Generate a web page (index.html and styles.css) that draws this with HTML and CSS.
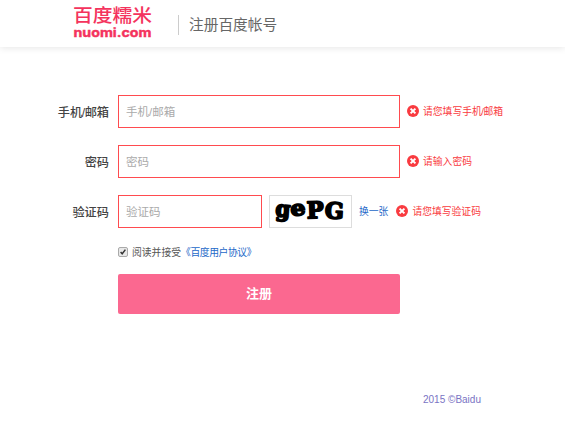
FILE: index.html
```html
<!DOCTYPE html>
<html lang="zh-CN">
<head>
    <meta charset="UTF-8">
    <meta name="viewport" content="width=device-width, initial-scale=1.0">
    <title>注册百度帐号</title>
    <link rel="stylesheet" href="styles.css">
</head>
<body>
    <svg class="symbols" width="0" height="0">
        <symbol id="icon-error" viewBox="0 0 12 12">
            <circle cx="6" cy="6" r="6" fill="#f93b40"/>
            <path d="M3.6 3.6l4.8 4.8M8.4 3.6l-4.8 4.8" stroke="#fff" stroke-width="2"/>
        </symbol>
    </svg>
    <header class="header">
        <svg class="logo" viewBox="0 0 80 34" width="80" height="34">
            <text class="logo-cn" x="0" y="15.5" textLength="79" lengthAdjust="spacingAndGlyphs">百度糯米</text>
            <text class="logo-en" x="0.5" y="30.5" textLength="78" lengthAdjust="spacingAndGlyphs">nuomi.com</text>
        </svg>
        <h1 class="title">注册百度帐号</h1>
    </header>
    <form class="form">
        <div class="row">
            <label class="label" for="account">手机<span class="slash">/</span>邮箱</label>
            <input class="input" id="account" type="text" placeholder="手机/邮箱">
            <span class="error"><svg class="error-icon"><use href="#icon-error"/></svg><span>请您填写手机<span class="slash">/</span>邮箱</span></span>
        </div>
        <div class="row">
            <label class="label" for="password">密码</label>
            <input class="input" id="password" type="password" placeholder="密码">
            <span class="error"><svg class="error-icon"><use href="#icon-error"/></svg><span>请输入密码</span></span>
        </div>
        <div class="row">
            <label class="label" for="code">验证码</label>
            <input class="input input-code" id="code" type="text" placeholder="验证码">
            <div class="captcha">
                <svg viewBox="0 0 81 31" width="81" height="31">
                    <text class="captcha-text" transform="translate(5 20) rotate(4)" font-size="22" textLength="15" lengthAdjust="spacingAndGlyphs">g</text>
                    <text class="captcha-text" transform="translate(21 20) rotate(-5)" font-size="21" textLength="15" lengthAdjust="spacingAndGlyphs">e</text>
                    <text class="captcha-text" transform="translate(37 22.5) rotate(-2)" font-size="23" textLength="17" lengthAdjust="spacingAndGlyphs">P</text>
                    <text class="captcha-text" transform="translate(54.5 22) rotate(3)" font-size="22" textLength="19" lengthAdjust="spacingAndGlyphs">G</text>
                </svg>
            </div>
            <a class="change" href="#">换一张</a>
            <span class="error error-code"><svg class="error-icon"><use href="#icon-error"/></svg><span>请您填写验证码</span></span>
        </div>
        <div class="agreement">
            <span class="checkbox">
                <svg viewBox="0 0 10 10" width="10" height="10"><path d="M2 5l2 2.2L8 2" fill="none" stroke="#333" stroke-width="1.8"/></svg>
            </span>
            <span>阅读并接受</span><a class="protocol" href="#">《百度用户协议》</a>
        </div>
        <button class="submit" type="button">注册</button>
    </form>
    <footer class="footer">2015 ©Baidu</footer>
</body>
</html>
```

FILE: styles.css
```css
* {
    box-sizing: border-box;
}

body {
    margin: 0;
    background: #fff;
    color: #555;
    font-family: "Liberation Sans", "Noto Sans CJK SC", sans-serif;
    font-size: 10px;
}

a {
    color: #2468c8;
    text-decoration: none;
}

.symbols {
    display: block;
}

.header {
    display: flex;
    height: 47px;
    padding: 6px 0 0 73px;
    box-shadow: 0 1px 7px rgba(0, 0, 0, 0.1);
}

.logo {
    overflow: visible;
    fill: #f4335d;
}

.logo-cn {
    font-family: "Noto Sans CJK SC", sans-serif;
    font-size: 18.5px;
    font-weight: 500;
}

.logo-en {
    stroke: #f4335d;
    stroke-width: 0.4;
    font-family: Inter, sans-serif;
    font-size: 12.5px;
    font-weight: 700;
}

.title {
    height: 20px;
    margin: 9px 0 0 25px;
    padding-left: 10px;
    border-left: 1px solid #ccc;
    color: #666;
    font-size: 14.7px;
    font-weight: 400;
    line-height: 21px;
}

.form {
    padding-top: 48px;
}

.row {
    display: flex;
    align-items: center;
    height: 33px;
    margin-bottom: 17px;
}

.label {
    width: 109px;
    margin-right: 9px;
    color: #444;
    font-size: 12.2px;
    font-weight: 500;
    text-align: right;
    white-space: nowrap;
}

.slash {
    margin: 0 -0.5px;
}

.input {
    width: 282px;
    height: 33px;
    padding: 0 8px 0 7px;
    border: 1px solid #ff4b4f;
    outline: none;
    font-family: inherit;
    font-size: 11.5px;
}

.input::placeholder {
    color: #aaa;
}

.input-code {
    width: 144px;
}

.captcha {
    width: 83px;
    height: 33px;
    margin: 0 7px;
    border: 1px solid #ddd;
}

.captcha svg {
    display: block;
    overflow: visible;
}

.captcha-text {
    fill: #000;
    stroke: #000;
    stroke-width: 1.8;
    stroke-linejoin: round;
    font-family: "DejaVu Serif", serif;
    font-weight: 700;
}

.change {
    padding-bottom: 2px;
    font-size: 9.8px;
}

.error {
    display: flex;
    align-items: center;
    gap: 4px;
    margin-left: 7px;
    padding-bottom: 2px;
    color: #f93b40;
    font-size: 9.8px;
    white-space: nowrap;
}

.error-code {
    margin-left: 8px;
}

.error-icon {
    width: 12px;
    height: 12px;
}

.agreement {
    display: flex;
    align-items: center;
    height: 14px;
    margin: 0 0 15px 118px;
    font-size: 9.8px;
}

.checkbox {
    width: 10px;
    height: 10px;
    margin-right: 4px;
    border: 1px solid #aaa;
    border-radius: 2px;
    background: #e8e8e8;
}

.checkbox svg {
    display: block;
    width: 8px;
    height: 8px;
}

.protocol {
    letter-spacing: -0.4px;
}

.submit {
    display: block;
    width: 282px;
    height: 40px;
    margin-left: 118px;
    padding-bottom: 4px;
    border: 0;
    border-radius: 2px;
    background: #fb6890;
    color: #fff;
    font-family: inherit;
    font-size: 13px;
    font-weight: 700;
}

.footer {
    margin: 79px 0 0 423px;
    color: #7a74c4;
    font-size: 10px;
    line-height: 13px;
}
```
